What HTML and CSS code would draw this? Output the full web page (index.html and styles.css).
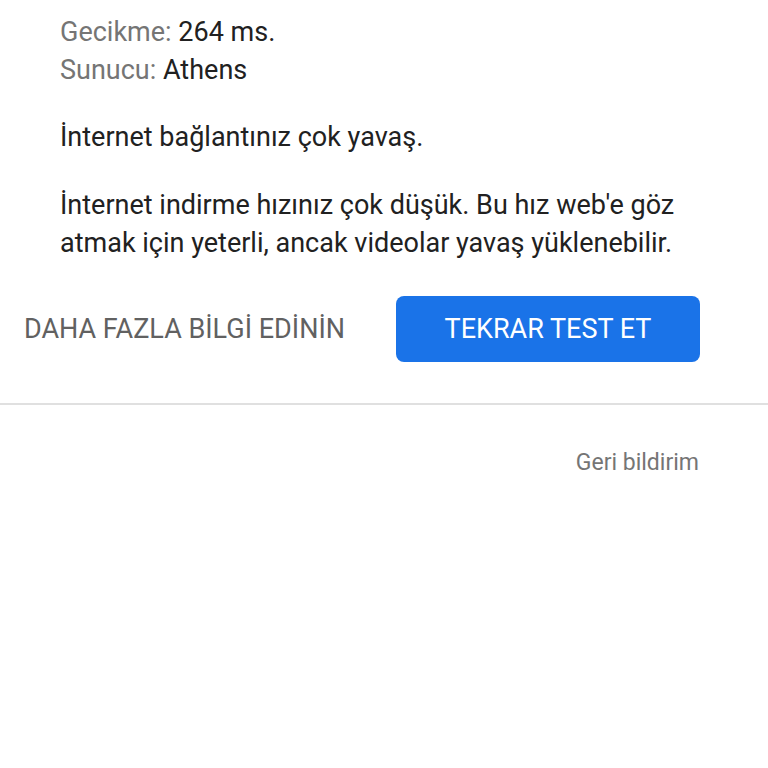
FILE: index.html
```html
<!DOCTYPE html>
<html lang="tr">
<head>
<meta charset="utf-8">
<link rel="stylesheet" href="styles.css">
</head>
<body>
<div class="result">
  <div class="stats">
    <div class="stat"><span class="label">Gecikme:</span> 264 ms.</div>
    <div class="stat"><span class="label">Sunucu:</span> Athens</div>
  </div>
  <p class="msg">İnternet bağlantınız çok yavaş.</p>
  <p class="msg">İnternet indirme hızınız çok düşük. Bu hız web'e göz atmak için yeterli, ancak videolar yavaş yüklenebilir.</p>
</div>
<div class="actions">
  <a class="more">DAHA FAZLA BİLGİ EDİNİN</a>
  <button class="retest">TEKRAR TEST ET</button>
</div>
<div class="footer">
  <a class="feedback">Geri bildirim</a>
</div>
</body>
</html>
```
FILE: styles.css
```css
html, body {
  margin: 0;
  padding: 0;
  background: #fff;
}
body {
  font-family: Roboto, "Noto Sans", sans-serif;
  color: #212121;
  width: 768px;
}
.result {
  padding: 13px 68px 0 60px;
  font-size: 27px;
  line-height: 38px;
}
.stats .label {
  color: #757575;
}
.msg {
  margin: 29px 0 0 0;
}
.msg + .msg {
  margin-top: 30px;
}
.actions {
  display: flex;
  align-items: center;
  padding: 34px 68px 41px 24px;
  border-bottom: 2px solid #e0e0e0;
}
.more {
  flex: 1;
  font-size: 27px;
  color: #616161;
}
.retest {
  width: 304px;
  height: 66px;
  border: none;
  border-radius: 8px;
  background: #1a73e8;
  color: #fff;
  font-family: Roboto, "Noto Sans", sans-serif;
  font-size: 27px;
}
.footer {
  display: flex;
  justify-content: flex-end;
  padding: 44px 69px 0 0;
}
.feedback {
  font-size: 23px;
  color: #757575;
}
```
